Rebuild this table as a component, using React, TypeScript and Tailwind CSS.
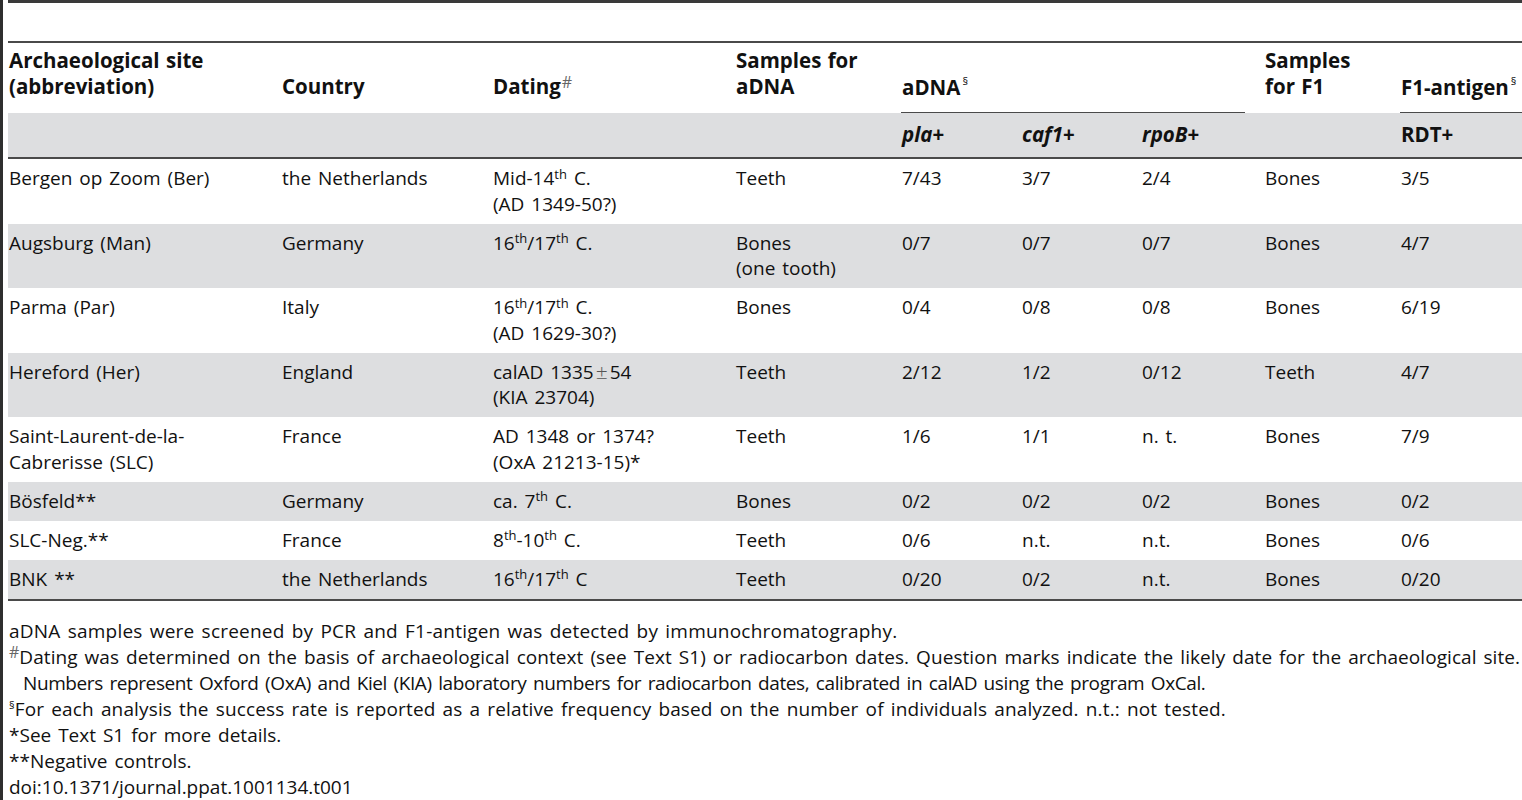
import React from "react";

const COLS = "grid grid-cols-[273px_211px_243px_166px_120px_120px_123px_136px_122px]";

function Th({ children }: { children: React.ReactNode }) {
  return <sup className="text-[13px]">{children}</sup>;
}

type Row = { cells: React.ReactNode[]; gray: boolean };

const rows: Row[] = [
  {
    gray: false,
    cells: [
      "Bergen op Zoom (Ber)",
      "the Netherlands",
      <>
        Mid-14<Th>th</Th> C.
        <br />
        (AD 1349-50?)
      </>,
      "Teeth",
      "7/43",
      "3/7",
      "2/4",
      "Bones",
      "3/5",
    ],
  },
  {
    gray: true,
    cells: [
      "Augsburg (Man)",
      "Germany",
      <>
        16<Th>th</Th>/17<Th>th</Th> C.
      </>,
      <>
        Bones
        <br />
        (one tooth)
      </>,
      "0/7",
      "0/7",
      "0/7",
      "Bones",
      "4/7",
    ],
  },
  {
    gray: false,
    cells: [
      "Parma (Par)",
      "Italy",
      <>
        16<Th>th</Th>/17<Th>th</Th> C.
        <br />
        (AD 1629-30?)
      </>,
      "Bones",
      "0/4",
      "0/8",
      "0/8",
      "Bones",
      "6/19",
    ],
  },
  {
    gray: true,
    cells: [
      "Hereford (Her)",
      "England",
      <>
        calAD 1335<span className="mx-[2px] text-[21px] font-light leading-none text-[#555]">±</span>54
        <br />
        (KIA 23704)
      </>,
      "Teeth",
      "2/12",
      "1/2",
      "0/12",
      "Teeth",
      "4/7",
    ],
  },
  {
    gray: false,
    cells: [
      <>
        Saint-Laurent-de-la-
        <br />
        Cabrerisse (SLC)
      </>,
      "France",
      <>
        AD 1348 or 1374?
        <br />
        (OxA 21213-15)*
      </>,
      "Teeth",
      "1/6",
      "1/1",
      "n. t.",
      "Bones",
      "7/9",
    ],
  },
  {
    gray: true,
    cells: [
      "Bösfeld**",
      "Germany",
      <>
        ca. 7<Th>th</Th> C.
      </>,
      "Bones",
      "0/2",
      "0/2",
      "0/2",
      "Bones",
      "0/2",
    ],
  },
  {
    gray: false,
    cells: [
      "SLC-Neg.**",
      "France",
      <>
        8<Th>th</Th>-10<Th>th</Th> C.
      </>,
      "Teeth",
      "0/6",
      "n.t.",
      "n.t.",
      "Bones",
      "0/6",
    ],
  },
  {
    gray: true,
    cells: [
      "BNK **",
      "the Netherlands",
      <>
        16<Th>th</Th>/17<Th>th</Th> C
      </>,
      "Teeth",
      "0/20",
      "0/2",
      "n.t.",
      "Bones",
      "0/20",
    ],
  },
];

function Section() {
  return (
    <span className="relative -top-[10px] ml-[2px] text-[11px] font-normal leading-none">§</span>
  );
}

export default function App() {
  return (
    <div
      className="flex h-[800px] w-[1522px] overflow-hidden bg-white text-[#111] text-[19px] [word-spacing:2px]"
      style={{ fontFamily: '"Open Sans", "Liberation Sans", sans-serif' }}
    >
      <div className="w-[3px] shrink-0 bg-[#2e2e2e]" />
      <div className="ml-[5px] flex w-[1514px] flex-col">
        <div className="h-[3px] bg-[#3a3a3a]" />
        <div className="h-[38px]" />
        <div className="h-[2px] bg-[#4a4a4a]" />

        {/* header */}
        <div className={`${COLS} h-[70px] items-end text-[20.5px] font-bold leading-[26px] [word-spacing:1px]`}>
          <div className="pb-[14px] pl-[1px]">
            Archaeological site
            <br />
            (abbreviation)
          </div>
          <div className="pb-[14px] pl-[1px]">Country</div>
          <div className="pb-[14px] pl-[1px]">
            Dating
            <span className="relative -top-[6px] ml-[1px] text-[16px] font-normal text-[#666] leading-none">#</span>
          </div>
          <div className="pb-[14px] pl-[1px]">
            Samples for
            <br />
            aDNA
          </div>
          <div className="col-span-3 mr-[19px] border-b-[1.5px] border-[#4a4a4a] pb-[12.5px] pl-[1px]">
            aDNA
            <Section />
          </div>
          <div className="pb-[14px] pl-[1px]">
            Samples
            <br />
            for F1
          </div>
          <div className="border-b-[1.5px] border-[#4a4a4a] pb-[12.5px] pl-[1px] whitespace-nowrap">
            F1-antigen
            <Section />
          </div>
        </div>

        {/* sub header */}
        <div className={`${COLS} h-[44px] items-center bg-[#dddee0] text-[20.5px] font-bold leading-[25.5px]`}>
          <div />
          <div />
          <div />
          <div />
          <div className="pl-[1px]">
            <i>pla</i>+
          </div>
          <div className="pl-[1px]">
            <i>caf1</i>+
          </div>
          <div className="pl-[1px]">
            <i>rpoB</i>+
          </div>
          <div />
          <div className="pl-[1px]">RDT+</div>
        </div>
        <div className="h-[2px] bg-[#4a4a4a]" />

        {rows.map((r, i) => (
          <div
            key={i}
            className={`${COLS} pt-[7px] pb-[6.5px] leading-[25.5px] ${r.gray ? "bg-[#dddee0]" : "bg-white"}`}
          >
            {r.cells.map((c, j) => (
              <div key={j} className="pl-[1px]">
                {c}
              </div>
            ))}
          </div>
        ))}
        <div className="h-[2px] bg-[#4a4a4a]" />

        {/* footnotes */}
        <div className="mt-[17.5px] pl-[1px] leading-[26px]">
          <p className="tracking-[0.22px]">
            aDNA samples were screened by PCR and F1-antigen was detected by immunochromatography.
          </p>
          <p className="pl-[14px] indent-[-14px]">
            <span className="relative -top-[6px] text-[16px] text-[#666] leading-none">#</span>
            <span className="tracking-[0.06px]">
              Dating was determined on the basis of archaeological context (see Text S1) or radiocarbon dates. Question
              marks indicate the likely date for the archaeological site.
            </span>
            <br />
            <span className="tracking-[-0.4px]">
              Numbers represent Oxford (OxA) and Kiel (KIA) laboratory numbers for radiocarbon dates, calibrated in
              calAD using the program OxCal.
            </span>
          </p>
          <p className="tracking-[0.14px]">
            <span className="relative -top-[7px] text-[11px] leading-none">§</span>For each analysis the success rate
            is reported as a relative frequency based on the number of individuals analyzed. n.t.: not tested.
          </p>
          <p>*See Text S1 for more details.</p>
          <p>**Negative controls.</p>
          <p>doi:10.1371/journal.ppat.1001134.t001</p>
        </div>
      </div>
    </div>
  );
}
